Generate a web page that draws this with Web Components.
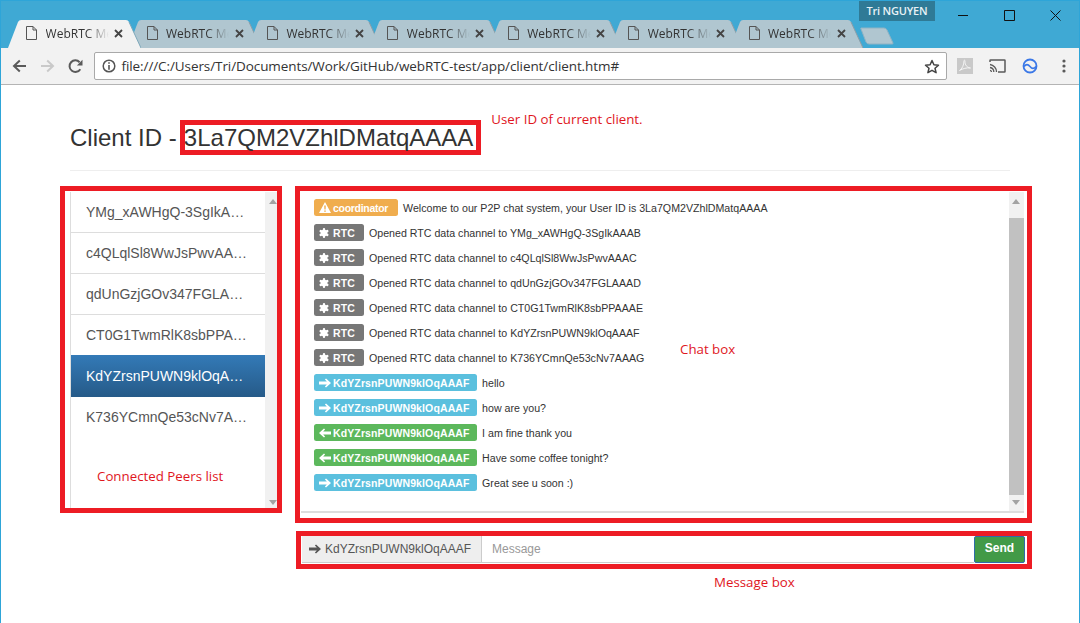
<!DOCTYPE html>
<html>
<head>
<meta charset="utf-8">
<title>WebRTC Messenger</title>
<style>
  html, body { margin: 0; height: 623px; overflow: hidden; background: #fff; }
  body { font-family: "Liberation Sans", Arial, sans-serif; }
</style>
</head>
<body>
<browser-window>
  <browser-tab active></browser-tab>
  <browser-tab></browser-tab>
  <browser-tab></browser-tab>
  <browser-tab></browser-tab>
  <browser-tab></browser-tab>
  <browser-tab></browser-tab>
  <browser-tab></browser-tab>

  <client-page slot="page">
    <red-frame slot="id" style="--pad: 0 3px 0 0">3La7QM2VZhlDMatqAAAA</red-frame>

    <red-frame slot="peers" style="--pad: 1px 0 0 5px">
      <peer-list>
        <peer-item>YMg_xAWHgQ-3SgIkAAAB</peer-item>
        <peer-item>c4QLqlSl8WwJsPwvAAAC</peer-item>
        <peer-item>qdUnGzjGOv347FGLAAAD</peer-item>
        <peer-item>CT0G1TwmRlK8sbPPAAAE</peer-item>
        <peer-item active>KdYZrsnPUWN9klOqAAAF</peer-item>
        <peer-item>K736YCmnQe53cNv7AAAG</peer-item>
      </peer-list>
    </red-frame>

    <red-frame slot="chat" style="--pad: 1px 3px 5px 1px">
      <chat-box>
        <chat-line kind="warning" icon="warn" who="coordinator">Welcome to our P2P chat system, your User ID is 3La7QM2VZhlDMatqAAAA</chat-line>
        <chat-line kind="default" icon="star" who="RTC">Opened RTC data channel to YMg_xAWHgQ-3SgIkAAAB</chat-line>
        <chat-line kind="default" icon="star" who="RTC">Opened RTC data channel to c4QLqlSl8WwJsPwvAAAC</chat-line>
        <chat-line kind="default" icon="star" who="RTC">Opened RTC data channel to qdUnGzjGOv347FGLAAAD</chat-line>
        <chat-line kind="default" icon="star" who="RTC">Opened RTC data channel to CT0G1TwmRlK8sbPPAAAE</chat-line>
        <chat-line kind="default" icon="star" who="RTC">Opened RTC data channel to KdYZrsnPUWN9klOqAAAF</chat-line>
        <chat-line kind="default" icon="star" who="RTC">Opened RTC data channel to K736YCmnQe53cNv7AAAG</chat-line>
        <chat-line kind="info" icon="right" who="KdYZrsnPUWN9klOqAAAF">hello</chat-line>
        <chat-line kind="info" icon="right" who="KdYZrsnPUWN9klOqAAAF">how are you?</chat-line>
        <chat-line kind="success" icon="left" who="KdYZrsnPUWN9klOqAAAF">I am fine thank you</chat-line>
        <chat-line kind="success" icon="left" who="KdYZrsnPUWN9klOqAAAF">Have some coffee tonight?</chat-line>
        <chat-line kind="info" icon="right" who="KdYZrsnPUWN9klOqAAAF">Great see u soon :)</chat-line>
      </chat-box>
    </red-frame>

    <red-frame slot="message" style="--pad: 0 0 1px 0">
      <message-box who="KdYZrsnPUWN9klOqAAAF"></message-box>
    </red-frame>
  </client-page>
</browser-window>

<script>
const ICONS = {
  warn: '<svg width="12" height="11" viewBox="0 0 12 11"><path fill="#fff" fill-rule="evenodd" d="M6 0l6 11H0zM5.200 3.600l.2 4h1.200l.2-4zM5.200 8.400v1.400h1.600V8.400z"/></svg>',
  star: '<svg width="10" height="10" viewBox="0 0 10 10"><g fill="none" stroke="#fff" stroke-width="2.400" stroke-linecap="round"><path d="M5 1.200v7.600M1.700 3.100l6.600 3.800M8.300 3.100l-6.600 3.800"/></g><circle cx="5" cy="5" r="3.200" fill="#fff"/></svg>',
  right: '<svg width="12" height="10" viewBox="0 0 13 10"><path fill="currentColor" d="M7.600 0L13 5 7.600 10 6.400 8.700 8.500 6.700H0V3.300h8.500L6.400 1.300z"/></svg>',
  left: '<svg width="12" height="10" viewBox="0 0 13 10"><path fill="currentColor" d="M5.400 0L0 5l5.400 5 1.200-1.300-2.100-2H13V3.300H4.500l2.100-2z"/></svg>'
};

class BrowserWindow extends HTMLElement {
  constructor() {
    super();
    this.shadowDOM = this.attachShadow({ mode: "open" });
    this.shadowDOM.innerHTML = `
      <style>
        :host { display: flex; flex-direction: column; height: 623px; box-sizing: border-box; border: solid #2ea5d8; border-width: 1px 1px 0; overflow: hidden; }
        .titlebar { background: #3fa9d4; height: 47px; flex: none; }
        .top { height: 19px; display: flex; justify-content: flex-end; }
        .profile { width: 76px; height: 20px; background: #2f7a96; color: #e8f2f6; font: 11px/19px "Open Sans", sans-serif; font-weight: 600; text-align: center; margin-right: 144px; letter-spacing: -.2px; }
        .controls { position: absolute; right: 1px; top: 0; display: flex; }
        .controls svg { display: block; }
        .ctrl { width: 46px; height: 28px; display: flex; align-items: center; justify-content: center; }
        .tabs { display: flex; padding-left: 6.600px; height: 28px; }
        ::slotted(browser-tab) { margin-right: -12.600px; }
        .newtab { margin: 7px 0 0 10px; width: 34px; height: 18px; flex: none; }
        .toolbar { height: 37px; box-sizing: border-box; background: #f2f2f2; border-bottom: 1px solid #b4b4b4; flex: none; display: flex; align-items: center; }
        .nav { width: 28px; height: 28px; display: flex; align-items: center; justify-content: center; flex: none; }
        .nav.first { margin-left: 4px; }
        .omnibox { margin-left: 4.500px; width: 851px; height: 26px; border: 1px solid #a9a9a9; border-radius: 2px; background: #fff; display: flex; align-items: center; flex: none; font: 13.500px "Open Sans", sans-serif; color: #333; white-space: nowrap; }
        .omnibox .info { margin: 0 6px 0 7px; flex: none; display: block; }
        .url { flex: 1; letter-spacing: -.09px; }
        .omnibox .star { margin-right: 6px; flex: none; }
        .ext { display: flex; align-items: center; margin-left: 2px; }
        .ext div { width: 32.500px; display: flex; justify-content: center; }
        .ext div:last-child { margin-left: 1.500px; }
        .ext svg { display: block; }
        .page { flex: 1; min-height: 0; }
        .wrap { position: relative; }
      </style>
      <div class="wrap">
      <div class="titlebar">
        <div class="top">
          <div class="profile">Tri NGUYEN</div>
        </div>
        <div class="tabs">
          <slot></slot>
          <svg class="newtab" viewBox="0 0 34 18"><path d="M1 1h23q2 0 3 2l6 13q.5 1-1 1H9q-2 0-3-2L1 2q-.5-1 0-1z" fill="#b0c6d0" stroke="#8fb3c4"/></svg>
        </div>
      </div>
      <div class="controls">
        <div class="ctrl"><svg width="11" height="11" viewBox="0 0 11 11"><path d="M0 5.500h10" stroke="#111" fill="none"/></svg></div>
        <div class="ctrl"><svg width="11" height="11" viewBox="0 0 11 11"><path d="M.5.500h10v10H.5z" stroke="#111" fill="none"/></svg></div>
        <div class="ctrl"><svg width="11" height="11" viewBox="0 0 11 11"><path d="M.5.500l10 10M10.500.500l-10 10" stroke="#111" fill="none"/></svg></div>
      </div>
      </div>
      <div class="toolbar">
        <div class="nav first"><svg width="15" height="14" viewBox="0 0 15 14"><path d="M14 7H2.500M7.800 1.500L2 7l5.800 5.500" fill="none" stroke="#5a5a5a" stroke-width="2"/></svg></div>
        <div class="nav"><svg width="15" height="14" viewBox="0 0 15 14"><path d="M1 7h11.500M7.200 1.500L13 7l-5.800 5.500" fill="none" stroke="#c9c9c9" stroke-width="2"/></svg></div>
        <div class="nav"><svg width="15" height="15" viewBox="0 0 15 15"><path d="M12.300 10.200A5.800 5.800 0 1 1 11.600 3.200" fill="none" stroke="#5a5a5a" stroke-width="2"/><path d="M14.500.800v5.600H8.900z" fill="#5a5a5a"/></svg></div>
        <div class="omnibox">
          <svg class="info" width="14" height="14" viewBox="0 0 14 14"><circle cx="7" cy="7" r="5.800" fill="none" stroke="#555" stroke-width="1.500"/><path d="M6.200 3.300h1.600v1.500H6.200zM6.200 6h1.600v4.700H6.200z" fill="#555"/></svg>
          <span class="url">file:///C:/Users/Tri/Documents/Work/GitHub/webRTC-test/app/client/client.htm#</span>
          <svg class="star" width="16" height="15" viewBox="0 0 16 15"><path d="M8 1.500l1.900 4.300 4.600.4-3.500 3 1.100 4.500L8 11.300l-4.100 2.400L5 9.200l-3.500-3 4.600-.4z" fill="none" stroke="#444" stroke-width="1.500" stroke-linejoin="round"/></svg>
        </div>
        <div class="ext">
          <div><svg width="16" height="16" viewBox="0 0 16 16"><rect width="16" height="16" fill="#c9c9c9"/><path d="M2.500 12.500C5 11 7 7 7 3c0-1.500 1.200-1 1 .5C7.800 7 10 9.500 13.500 10c-4 -.5-7.500.5-11 2.500z" fill="none" stroke="#f4f4f4"/></svg></div>
          <div><svg width="17" height="14" viewBox="0 0 17 14"><path d="M1 3V1.500q0-.5.5-.5h14q.5 0 .5.5v11q0 .5-.5.5H9" fill="none" stroke="#5a5a5a" stroke-width="1.500"/><path d="M1 5.500A7.500 7.500 0 0 1 7.500 13M1 8.500A4.500 4.500 0 0 1 4.800 13M1 11.300a1.700 1.700 0 0 1 1.500 1.700" fill="none" stroke="#5a5a5a" stroke-width="1.300"/></svg></div>
          <div><svg width="16" height="16" viewBox="0 0 16 16"><circle cx="8" cy="8" r="6.500" fill="none" stroke="#3b78e7" stroke-width="1.800"/><path d="M2 8.500c2-2.500 4-2.500 6 0s4 2.500 6 0" fill="none" stroke="#3b78e7" stroke-width="1.600"/></svg></div>
          <div><svg width="4" height="14" viewBox="0 0 4 14"><g fill="#5a5a5a"><circle cx="2" cy="2" r="1.600"/><circle cx="2" cy="7" r="1.600"/><circle cx="2" cy="12" r="1.600"/></g></svg></div>
        </div>
      </div>
      <div class="page"><slot name="page"></slot></div>
    `;
  }
}

class BrowserTab extends HTMLElement {
  constructor() {
    super();
    this.shadowDOM = this.attachShadow({ mode: "open" });
  }
  connectedCallback() {
    const active = this.hasAttribute("active");
    this.shadowDOM.innerHTML = `
      <style>
        :host { display: block; position: relative; width: 133px; height: 28px; flex: none; z-index: ${active ? 2 : 1}; }
        svg.shape { position: absolute; left: 0; top: 0; }
        .body { position: relative; display: flex; align-items: center; height: 26px; padding-left: 18.500px; color: #333; }
        .file { flex: none; display: block; }
        .title { margin-left: 8.500px; white-space: nowrap; font: 12px "Open Sans", sans-serif; -webkit-mask-image: linear-gradient(90deg, #000 60%, transparent 94%); mask-image: linear-gradient(90deg, #000 60%, transparent 94%); }
        .close { position: absolute; left: 106.500px; top: 8.500px; display: block; }
      </style>
      <svg class="shape" width="133" height="28" viewBox="0 0 133 28">
        <path d="M0 28 L10 2 Q11 0 13 0 H118 Q120 0 121 2 L133 28 Z" fill="${active ? "#f2f2f2" : "#b0c6d0"}"/>
        <path d="M121 2 L133 28" fill="none" stroke="${active ? "#7ea8ba" : "#8b9ea8"}"/>
      </svg>
      <div class="body">
        <svg class="file" width="11" height="14" viewBox="0 0 11 14"><path d="M.5.500h6.500l3.500 3.500v9.500H.5zM7 .500v3.500h3.500" fill="none" stroke="#555"/></svg>
        <div class="title">WebRTC Me</div>
        <svg class="close" width="9" height="9" viewBox="0 0 9 9"><path d="M1 1l7 7M8 1L1 8" stroke="#444" stroke-width="1.800" fill="none"/></svg>
      </div>
    `;
  }
}

class RedFrame extends HTMLElement {
  constructor() {
    super();
    this.shadowDOM = this.attachShadow({ mode: "open" });
    this.shadowDOM.innerHTML = `
      <style>
        :host { display: block; box-sizing: border-box; border: 5px solid #ed1c24; padding: var(--pad, 0); min-width: 0; }
      </style>
      <slot></slot>
    `;
  }
}

class ClientPage extends HTMLElement {
  constructor() {
    super();
    this.shadowDOM = this.attachShadow({ mode: "open" });
    this.shadowDOM.innerHTML = `
      <style>
        :host { display: block; position: relative; height: 100%; font-family: "Liberation Sans", Arial, sans-serif; color: #333; }
        .header { height: 35px; margin: 35px 0 0 69px; width: 940px; display: flex; align-items: center; font-size: 24px; white-space: nowrap; }
        .header ::slotted(red-frame) { margin-left: -3px; line-height: 25px; text-indent: -1.500px; }
        .prefix { white-space: pre; }
        .note { font: 13.300px "Open Sans", sans-serif; color: #e0161e; white-space: nowrap; }
        .header .note { margin: -37px 0 0 10px; }
        hr { margin: 15px 0 0 69px; width: 940px; border: 0; border-top: 1px solid #eee; height: 0; }
        .main { display: grid; grid-template-columns: 222px 737px; column-gap: 13px; row-gap: 8px; margin: 15px 0 0 59px; align-items: start; }
        .peers { grid-row: 1 / span 2; position: relative; }
        .peers .note { position: absolute; left: 37px; top: 281px; }
        .chat { position: relative; }
        .chat .note { position: absolute; left: 385px; top: 154px; }
        .message { margin-left: 1px; width: 736px; }
        .bottom { grid-column: 2; margin-top: -4px; padding-left: 419px; }
      </style>
      <div class="header">
        <span class="prefix">Client ID - </span><slot name="id"></slot>
        <span class="note">User ID of current client.</span>
      </div>
      <hr>
      <div class="main">
        <div class="peers"><slot name="peers"></slot><span class="note">Connected Peers list</span></div>
        <div class="chat"><slot name="chat"></slot><span class="note">Chat box</span></div>
        <div class="message"><slot name="message"></slot></div>
        <div class="bottom"><span class="note">Message box</span></div>
      </div>
    `;
  }
}

class FakeScrollbar extends HTMLElement {
  constructor() {
    super();
    this.shadowDOM = this.attachShadow({ mode: "open" });
  }
  connectedCallback() {
    const top = this.getAttribute("thumb-top");
    const height = this.getAttribute("thumb-height");
    this.shadowDOM.innerHTML = `
      <style>
        :host { display: flex; flex-direction: column; align-items: center; position: relative; width: 15px; flex: none; background: #f1f1f1; }
        .arrow { width: 0; height: 0; position: absolute; left: var(--arrow-left, 3px); border: 4px solid transparent; }
        .up { top: 7px; border-top: 0; border-bottom: 5px solid #a3a3a3; }
        .down { bottom: var(--arrow-bottom, 6px); border-bottom: 0; border-top: 5px solid #a3a3a3; }
        .thumb { width: 100%; background: #c1c1c1; }
      </style>
      <div class="arrow up"></div>
      ${top ? `<div class="thumb" style="margin-top:${top}px;height:${height}px"></div>` : ""}
      <div class="arrow down"></div>
    `;
  }
}

class PeerList extends HTMLElement {
  constructor() {
    super();
    this.shadowDOM = this.attachShadow({ mode: "open" });
    this.shadowDOM.innerHTML = `
      <style>
        :host { display: flex; height: 316px; background: #fff; border-left: 1px solid #ddd; box-sizing: border-box; width: 207px; }
        .items { flex: 1; min-width: 0; }
        fake-scrollbar { width: 12px; --arrow-left: 4px; --arrow-bottom: 3px; }
      </style>
      <div class="items"><slot></slot></div>
      <fake-scrollbar></fake-scrollbar>
    `;
  }
}

class PeerItem extends HTMLElement {
  constructor() {
    super();
    this.shadowDOM = this.attachShadow({ mode: "open" });
    this.shadowDOM.innerHTML = `
      <style>
        :host { display: block; box-sizing: border-box; height: 41px; padding: 10px 15px; border-bottom: 1px solid #ddd; color: #555; font-size: 14px; line-height: 20px; }
        :host([active]) { background: linear-gradient(#337ab7, #265a88); color: #fff; border-bottom: 0; height: 42px; margin-top: -1px; padding-top: 11px; }
        :host(:last-child) { border-bottom: 0; }
        .name { overflow: hidden; white-space: nowrap; text-overflow: ellipsis; }
      </style>
      <div class="name"><slot></slot></div>
    `;
  }
}

class ChatBox extends HTMLElement {
  constructor() {
    super();
    this.shadowDOM = this.attachShadow({ mode: "open" });
    this.shadowDOM.innerHTML = `
      <style>
        :host { display: flex; height: 321px; box-sizing: border-box; border-bottom: 2px solid #ddd; background: #fff; }
        .log { flex: 1; min-width: 0; padding: 7px 0 0 13px; }
      </style>
      <div class="log"><slot></slot></div>
      <fake-scrollbar thumb-top="26" thumb-height="277"></fake-scrollbar>
    `;
  }
}

class ChatLine extends HTMLElement {
  constructor() {
    super();
    this.shadowDOM = this.attachShadow({ mode: "open" });
  }
  connectedCallback() {
    const colors = { warning: "#f0ad4e", default: "#777", info: "#5bc0de", success: "#5cb85c" };
    const pads = { warning: 10, default: 9, info: 7.5, success: 7.5 };
    const kind = this.getAttribute("kind");
    this.shadowDOM.innerHTML = `
      <style>
        :host { display: flex; align-items: center; height: 25px; font-size: 10.650px; color: #333; white-space: nowrap; }
        .label { display: flex; align-items: center; height: 17px; box-sizing: border-box; padding: 0 ${pads[kind]}px 0 5px; margin: -8px 5px 0 0; border-radius: 2.500px; background: ${colors[kind]}; color: #fff; font-weight: 700; font-size: 10.500px; letter-spacing: ${kind === "warning" ? -0.3 : 0.12}px; }
        .icon { flex: none; width: 14px; display: block; }
        .icon svg { display: block; }
        .text { margin-top: -8px; }
      </style>
      <span class="label"><span class="icon">${ICONS[this.getAttribute("icon")]}</span>${this.getAttribute("who")}</span>
      <span class="text"><slot></slot></span>
    `;
  }
}

class MessageBox extends HTMLElement {
  constructor() {
    super();
    this.shadowDOM = this.attachShadow({ mode: "open" });
  }
  connectedCallback() {
    this.shadowDOM.innerHTML = `
      <style>
        :host { display: flex; height: 27px; box-sizing: border-box; padding-right: 2px; font-size: 12px; }
        .addon { display: flex; align-items: center; gap: 4px; width: 180px; box-sizing: border-box; padding: 0 0 1px 7px; background: #eee; color: #555; border-right: 1px solid #ccc; border-bottom: 1px solid #ccc; font-size: 12px; white-space: nowrap; margin-left: 1px; }
        .addon svg { display: block; width: 12px; }
        input { flex: 1; min-width: 0; border: 0; border-bottom: 1px solid #ccc; padding: 0 10px 1px; outline: 0; font: 12px "Liberation Sans", Arial, sans-serif; }
        input::placeholder { color: #999; opacity: 1; }
        button { width: 51px; flex: none; box-sizing: border-box; border: 1px solid #2f6ca8; border-radius: 2px; background: #429a47; color: #fff; font: 700 12px "Liberation Sans", Arial, sans-serif; padding: 0 0 3px; }
      </style>
      <div class="addon"><span>${ICONS.right}</span>${this.getAttribute("who")}</div>
      <input placeholder="Message">
      <button>Send</button>
    `;
  }
}

customElements.define("browser-window", BrowserWindow);
customElements.define("browser-tab", BrowserTab);
customElements.define("red-frame", RedFrame);
customElements.define("client-page", ClientPage);
customElements.define("fake-scrollbar", FakeScrollbar);
customElements.define("peer-list", PeerList);
customElements.define("peer-item", PeerItem);
customElements.define("chat-box", ChatBox);
customElements.define("chat-line", ChatLine);
customElements.define("message-box", MessageBox);
</script>
</body>
</html>
